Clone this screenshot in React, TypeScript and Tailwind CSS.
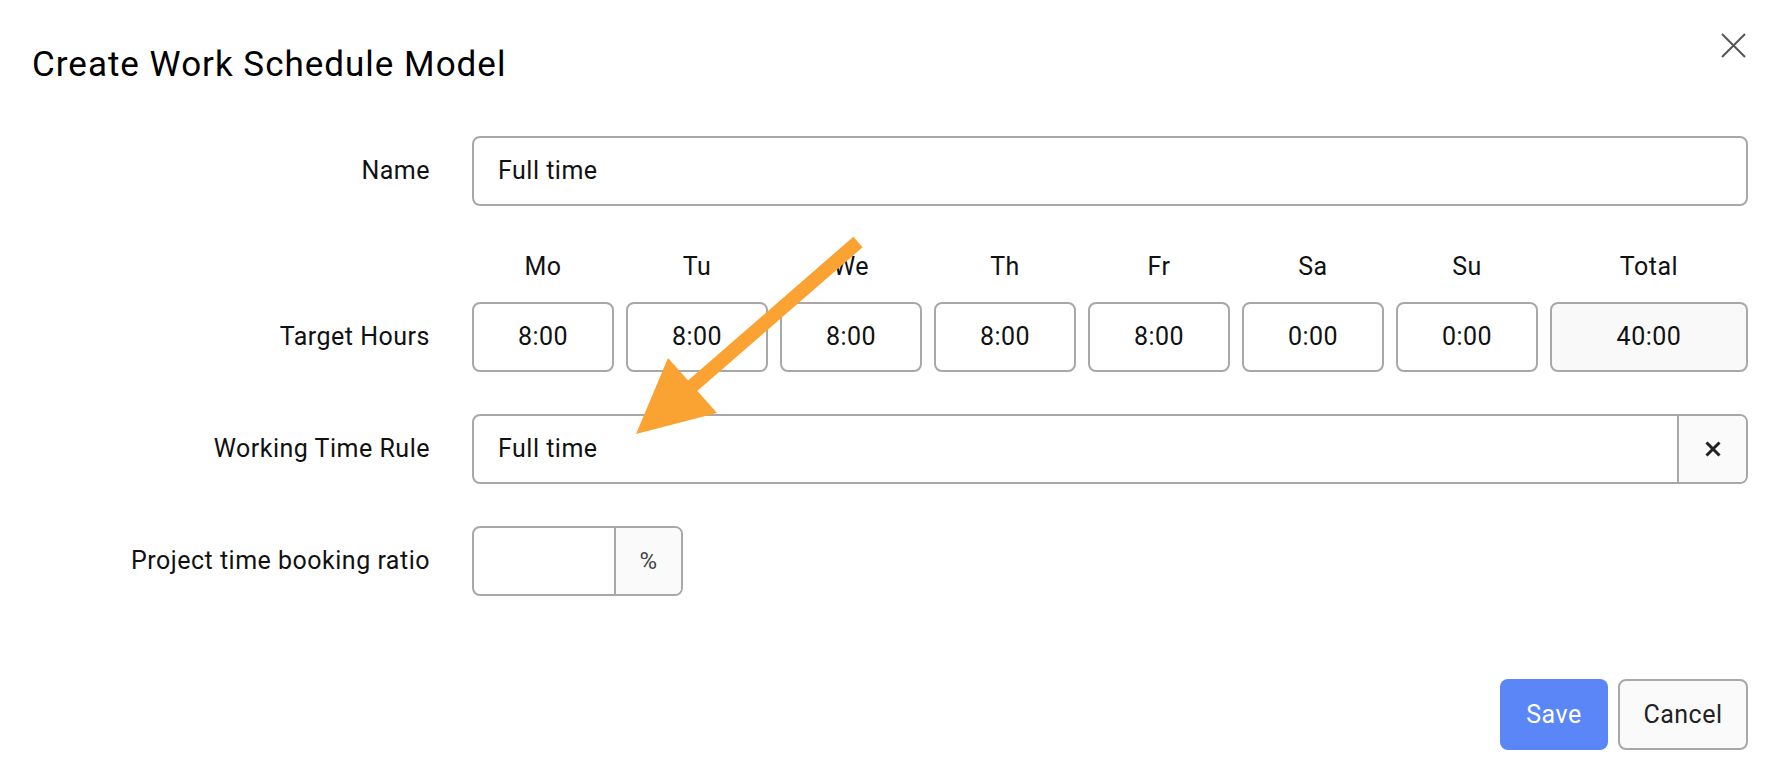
import React from 'react';

const days = [
  { day: 'Mo', hours: '8:00' },
  { day: 'Tu', hours: '8:00' },
  { day: 'We', hours: '8:00' },
  { day: 'Th', hours: '8:00' },
  { day: 'Fr', hours: '8:00' },
  { day: 'Sa', hours: '0:00' },
  { day: 'Su', hours: '0:00' },
];

const Label = ({ children }: { children: React.ReactNode }) => (
  <div className="flex h-[70px] w-[398px] shrink-0 items-center justify-end text-[25px]">{children}</div>
);

const App = () => {
  return (
    <div className="relative min-h-[784px] bg-white pl-8 pr-[28px] pt-[44px] font-['Roboto','Liberation_Sans',sans-serif] tracking-[0.5px] text-[#111]">
      <div className="flex items-start justify-between">
        <h1 className="text-[35px] leading-[42px] tracking-[1px] text-black">Create Work Schedule Model</h1>
        <button className="mr-[2px] mt-[-11px] flex h-[25px] w-[25px] items-center justify-center">
          <svg width="25" height="25" viewBox="0 0 25 25">
            <path d="M1 1 L24 24 M24 1 L1 24" stroke="#555" strokeWidth="2" fill="none" />
          </svg>
        </button>
      </div>

      {/* name */}
      <div className="mt-[50px] flex gap-[42px]">
        <Label>Name</Label>
        <div className="flex h-[70px] flex-1 items-center rounded-lg border-2 border-[#a8a8a8] pl-6 text-[25px]">
          Full time
        </div>
      </div>

      {/* target hours */}
      <div className="mt-[44px] flex gap-[42px]">
        <div className="flex flex-col">
          <div className="h-[52px]" />
          <Label>Target Hours</Label>
        </div>
        <div className="grid flex-1 grid-cols-[repeat(7,142px)_1fr] gap-x-3 gap-y-[18px]">
          {days.map((d) => (
            <div key={d.day} className="h-[34px] text-center text-[25px] leading-[34px]">
              {d.day}
            </div>
          ))}
          <div className="h-[34px] text-center text-[25px] leading-[34px]">Total</div>
          {days.map((d) => (
            <div
              key={d.day + '-h'}
              className="flex h-[70px] items-center justify-center rounded-lg border-2 border-[#a8a8a8] text-[25px]"
            >
              {d.hours}
            </div>
          ))}
          <div className="flex h-[70px] items-center justify-center rounded-lg border-2 border-[#a8a8a8] bg-[#f9f9f9] text-[25px]">
            40:00
          </div>
        </div>
      </div>

      {/* working time rule */}
      <div className="mt-[42px] flex gap-[42px]">
        <Label>Working Time Rule</Label>
        <div className="flex h-[70px] flex-1 overflow-hidden rounded-lg border-2 border-[#a8a8a8]">
          <div className="flex flex-1 items-center pl-6 text-[25px]">Full time</div>
          <div className="flex w-[69px] items-center justify-center border-l-2 border-[#a8a8a8] bg-[#fafafa]">
            <svg width="16" height="16" viewBox="0 0 16 16">
              <path d="M1.5 1.5 L14.5 14.5 M14.5 1.5 L1.5 14.5" stroke="#222" strokeWidth="3" fill="none" />
            </svg>
          </div>
        </div>
      </div>

      {/* project ratio */}
      <div className="mt-[42px] flex gap-[42px]">
        <Label>Project time booking ratio</Label>
        <div className="flex h-[70px] w-[211px] overflow-hidden rounded-lg border-2 border-[#a8a8a8]">
          <div className="w-[140px]" />
          <div className="flex flex-1 items-center justify-center border-l-2 border-[#a8a8a8] bg-[#fafafa] text-[24px] text-[#444]">
            %
          </div>
        </div>
      </div>

      {/* footer */}
      <div className="mt-[83px] flex justify-end gap-[10px]">
        <button className="h-[71px] w-[108px] rounded-lg bg-[#5a86f8] text-[25px] text-white">Save</button>
        <button className="h-[71px] w-[130px] rounded-lg border-2 border-[#a8a8a8] bg-[#fafafa] text-[25px] text-[#222]">
          Cancel
        </button>
      </div>

      {/* annotation arrow */}
      <svg className="pointer-events-none absolute left-0 top-0" width="1776" height="784">
        <line x1="858" y1="242" x2="690" y2="388" stroke="#faa332" strokeWidth="14" />
        <polygon points="636,434 668,358 717,413" fill="#faa332" />
      </svg>
    </div>
  );
};

export default App;
